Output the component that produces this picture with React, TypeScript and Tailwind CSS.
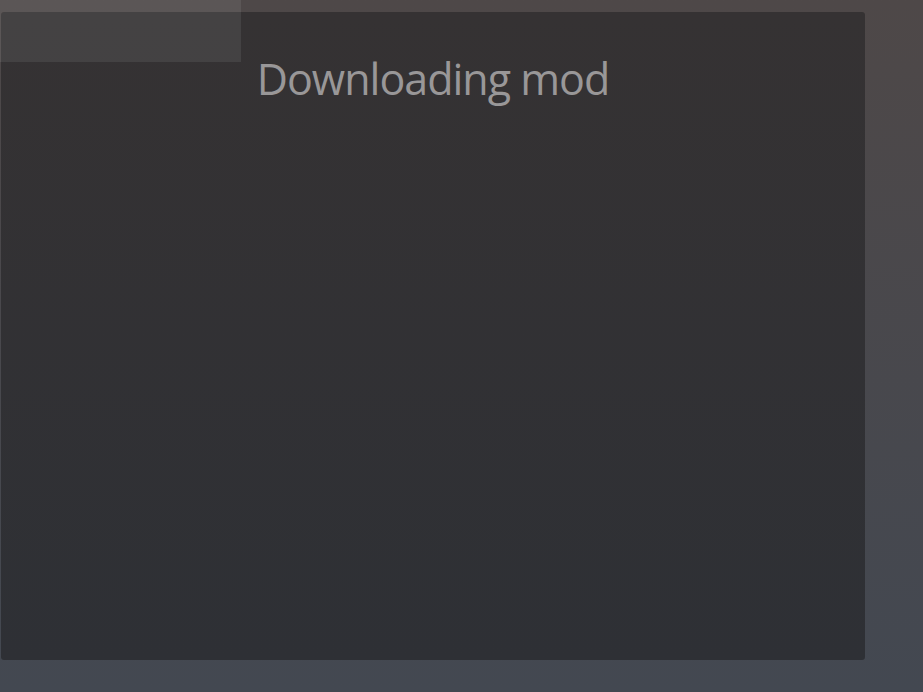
import React from "react";

export default function App() {
  return (
    <div className="relative w-[923px] h-[692px] overflow-hidden bg-gradient-to-b from-[#4e4848] to-[#434851]">
      <div className="absolute left-0 top-0 w-[241px] h-[62px] bg-white/[0.08] z-10" />
      <div className="pt-[12px] pl-[1px]">
        <div className="w-[864px] h-[648px] rounded-[3px] bg-gradient-to-b from-[#353233] to-[#2e3035] flex flex-col items-center">
          <h1
            className="mt-[39px] text-[43px] leading-[55px] tracking-[-1px] text-[#999798]"
            style={{ fontFamily: '"Open Sans", sans-serif' }}
          >
            Downloading mod
          </h1>
        </div>
      </div>
    </div>
  );
}
